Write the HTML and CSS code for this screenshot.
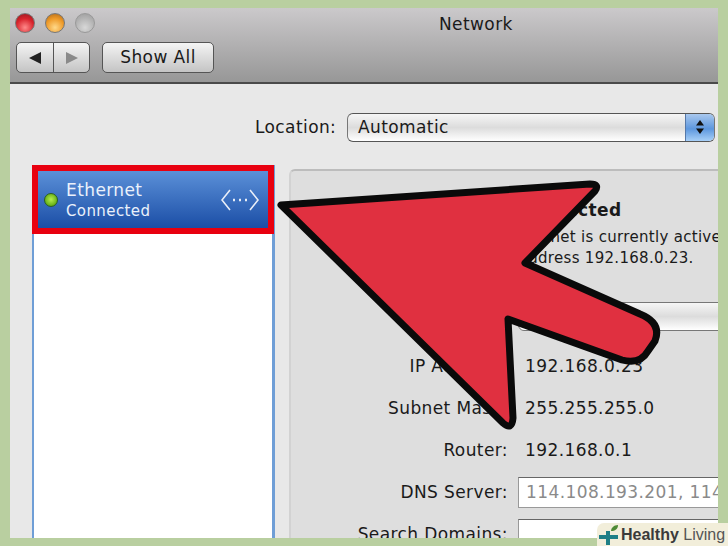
FILE: index.html
```html
<!DOCTYPE html>
<html lang="en">
<head>
<meta charset="utf-8">
<title>Network</title>
<link rel="stylesheet" href="styles.css">
</head>
<body>
<div class="window">
  <header class="titlebar">
    <div class="lights-row">
      <span class="light light-red"></span>
      <span class="light light-amber"></span>
      <span class="light light-off"></span>
      <span class="win-title">Network</span>
    </div>
    <div class="tools">
      <div class="nav-group">
        <span class="nav-btn nav-back"><svg width="14" height="14" viewBox="0 0 14 14"><path d="M1 7 13 1v12z" fill="#222"/></svg></span>
        <span class="nav-btn"><svg width="14" height="14" viewBox="0 0 14 14"><path d="M13 7 1 1v12z" fill="#8a8a8a"/></svg></span>
      </div>
      <span class="show-all">Show All</span>
    </div>
  </header>
  <main class="body">
    <div class="location">
      <span class="location-label">Location:</span>
      <div class="select">
        <span class="select-value">Automatic</span>
        <span class="stepper"><svg width="10" height="18" viewBox="0 0 10 18"><path d="M5 2 9 7.500H1zM5 16 1 10.500h8z" fill="#111"/></svg></span>
      </div>
    </div>
    <div class="columns">
      <aside class="sidebar">
        <div class="service">
          <span class="led"></span>
          <div class="service-text">
            <div class="service-name">Ethernet</div>
            <div class="service-status">Connected</div>
          </div>
          <svg class="service-icon" width="38" height="28" viewBox="0 0 38 28" fill="none" stroke="#e8eef8" stroke-width="1.6"><path d="M9 4 1 14l8 10M29 4l8 10-8 10"/><path d="M12 14h2M18 14h2M24 14h2" stroke-width="2.4"/></svg>
        </div>
      </aside>
      <section class="panel">
        <div class="status">
          <div class="status-title">Status: Connected</div>
          <p class="status-text">Ethernet is currently active and has<br><span class="status-line">the IP address 192.168.0.23.</span></p>
        </div>
        <div class="configure"></div>
        <div class="fields">
          <span class="field-label">IP Address:</span><span class="field-value">192.168.0.23</span>
          <span class="field-label">Subnet Mask:</span><span class="field-value">255.255.255.0</span>
          <span class="field-label">Router:</span><span class="field-value">192.168.0.1</span>
          <span class="field-label">DNS Server:</span><span class="field-input field-muted">114.108.193.201, 114.114.114.114</span>
          <span class="field-label">Search Domains:</span><span class="field-input"></span>
        </div>
      </section>
    </div>
  </main>
</div>
<svg class="arrow" width="728" height="546" viewBox="0 0 728 546">
  <path d="M281 205 590 184Q600 184 595 191L525 263 640 314Q662 323 655 341L648 351Q640 365 622 360L508 319 513 418Q512 431 503 423Z" fill="#e03040" stroke="#0a0a0a" stroke-width="7" stroke-linejoin="round"/>
</svg>
<div class="badge">
  <svg class="badge-logo" width="20" height="20" viewBox="0 0 20 20"><path d="M7 6h4v4h8v4h-8v6H7v-6H0v-4h7z" fill="#1f7f86"/><path d="M12 6c0-3 3-6 7-6 0 4-3 6-7 6z" fill="#4d8a35"/></svg>
  <span class="badge-text"><b>Healthy</b> Living</span>
</div>
</body>
</html>
```
FILE: styles.css
```css
* { box-sizing: border-box; }
html, body { margin: 0; height: 546px; }
body {
  position: relative;
  overflow: hidden;
  background: #b9cfa0;
  padding: 8px 10px;
  font-family: "DejaVu Sans", sans-serif;
  font-size: 17px;
  letter-spacing: .4px;
  color: #1a1a1a;
}
.window {
  width: 708px;
  height: 530px;
  overflow: hidden;
  background: #e8e8e8;
  display: flex;
  flex-direction: column;
}
.titlebar {
  height: 76px;
  flex: none;
  padding: 5px 0 0 5px;
  background: linear-gradient(#cbc9cb, #979797);
  border-bottom: 2px solid #4a4a4a;
}
.lights-row {
  position: relative;
  display: flex;
  gap: 10px;
  height: 20px;
}
.light {
  width: 20px;
  height: 20px;
  border-radius: 50%;
  border: 1px solid #777;
}
.light-red { background: radial-gradient(circle at 50% 75%, #ff8a8a, #d8232c 55%, #8c1a20); }
.light-amber { background: radial-gradient(circle at 50% 75%, #ffd98a, #ee9a28 55%, #a9651a); }
.light-off { background: radial-gradient(circle at 50% 75%, #d8d8d8, #b2b2b2 60%, #9a9a9a); border-color: #999; }
.win-title {
  position: absolute;
  left: 424px;
  top: 0;
  line-height: 22px;
}
.tools {
  display: flex;
  gap: 12px;
  margin: 9px 0 0 1px;
}
.nav-group {
  display: flex;
  width: 74px;
  height: 31px;
  border: 1px solid #555;
  border-radius: 5px;
  background: linear-gradient(#f4f4f4, #c4c4c4);
}
.nav-btn {
  flex: 1;
  display: flex;
  align-items: center;
  justify-content: center;
}
.nav-back { flex: none; width: 37px; border-right: 1px solid #555; }
.show-all {
  width: 112px;
  height: 31px;
  border: 1px solid #555;
  border-radius: 5px;
  background: linear-gradient(#f4f4f4, #c4c4c4);
  text-align: center;
  line-height: 29px;
}
.body { flex: 1; min-height: 0; display: flex; flex-direction: column; }
.location {
  display: flex;
  align-items: center;
  height: 28px;
  margin: 29px 0 0 245px;
}
.location-label { width: 92px; }
.select {
  flex: none;
  width: 368px;
  height: 29px;
  display: flex;
  justify-content: space-between;
  border: 1px solid #777;
  border-top-color: #555;
  border-bottom-color: #555;
  border-radius: 6px;
  background: linear-gradient(#f6f6f6, #dcdcdc 50%, #ffffff);
  overflow: hidden;
}
.select-value { padding-left: 10px; line-height: 27px; }
.stepper {
  width: 29px;
  display: flex;
  align-items: center;
  justify-content: center;
  background: linear-gradient(#a9c8ee, #5d97de 55%, #a8d0f8);
  border-left: 1px solid #5578a8;
}
.columns { flex: 1; min-height: 0; display: flex; margin-top: 28px; padding-left: 22px; }
.sidebar {
  flex: none;
  width: 243px;
  background: #fff;
  margin-top: -4px;
  border-left: 2px solid #6f9ed6;
  border-right: 3px solid #6f9ed6;
}
.service {
  margin: 0 -2px;
  height: 69px;
  border: 6px solid #e8000f;
  background: linear-gradient(#5b90d8, #1b4ea6);
  display: flex;
  align-items: center;
  padding-left: 6px;
  color: #eaf1fb;
}
.led {
  width: 14px;
  height: 14px;
  margin-top: 1px;
  border-radius: 50%;
  background: radial-gradient(circle at 50% 45%, #b6ee50, #66b016 70%, #2d6a12);
  border: 1px solid #2c5f22;
}
.service-text { margin-left: 8px; flex: 1; }
.service-name { font-size: 17px; line-height: 22px; padding-top: 1px; }
.service-status { font-size: 15px; line-height: 20px; }
.service-icon { margin-right: 9px; }
.panel {
  flex: none;
  width: 444px;
  margin-left: 14px;
  background: #dedede;
  border-top: 2px solid #bcbcbc;
  border-left: 2px solid #d2d2d2;
  border-top-left-radius: 6px;
}
.status { margin-left: 230px; padding-top: 27px; white-space: nowrap; }
.status-title { font-weight: 700; line-height: 24px; margin-left: -83px; }
.status-text { margin: 5px 0 0 -12px; font-size: 15px; line-height: 21px; letter-spacing: .3px; }
.status-line { margin-left: -40px; }
.configure {
  margin: 33px 0 0 227px;
  width: 260px;
  height: 29px;
  border: 1px solid #777;
  border-radius: 6px;
  background: linear-gradient(#f6f6f6, #dcdcdc 50%, #ffffff);
}
.fields {
  display: grid;
  grid-template-columns: 217px 260px;
  grid-auto-rows: 42px;
  column-gap: 10px;
  align-items: center;
  margin-top: 14px;
  white-space: nowrap;
}
.field-label { text-align: right; }
.field-value { padding-left: 7px; }
.field-input {
  height: 31px;
  background: #fff;
  border: 1px solid #999;
  border-top-color: #666;
  padding-left: 7px;
  line-height: 29px;
  overflow: hidden;
}
.field-muted { color: #8a8a8a; }
.arrow { position: absolute; left: 0; top: 0; pointer-events: none; }
.badge {
  position: absolute;
  right: 0;
  bottom: 0;
  width: 131px;
  height: 23px;
  display: flex;
  align-items: center;
  gap: 2px;
  padding-left: 2px;
  background: #f2eeda;
  border-top-left-radius: 7px;
  font-family: "Liberation Sans", sans-serif;
  font-size: 16px;
  letter-spacing: 0;
  color: #555;
  white-space: nowrap;
}
.badge-logo { flex: none; }
.badge b { color: #3a3a3a; }
```
